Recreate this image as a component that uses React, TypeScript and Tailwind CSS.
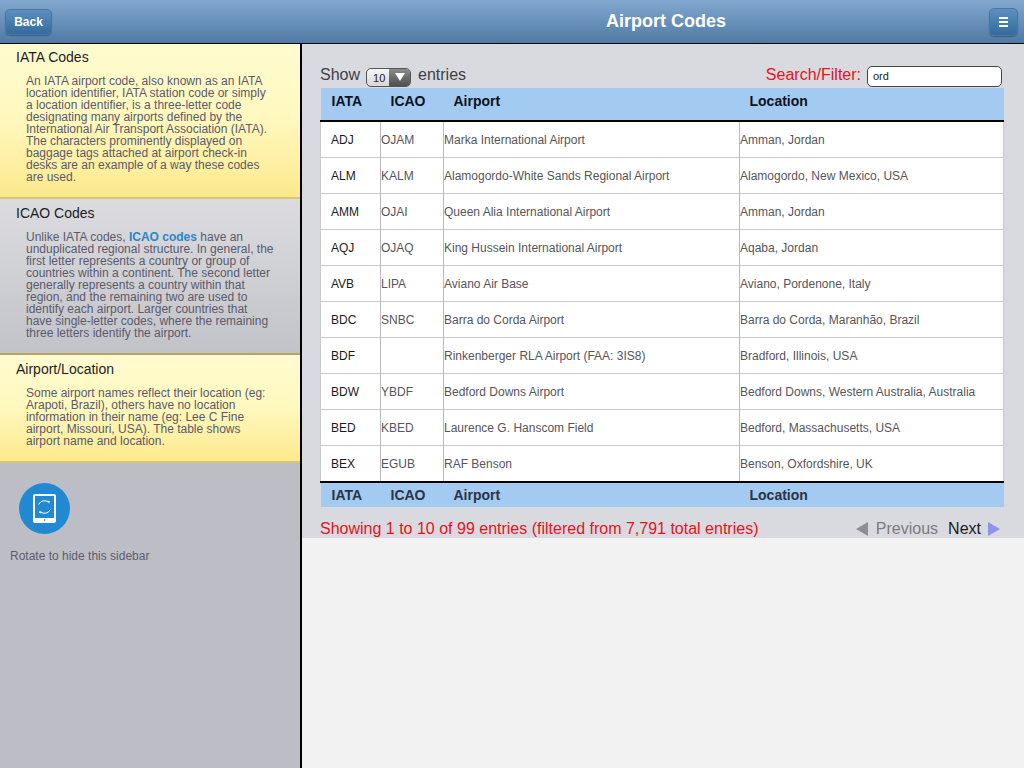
const rows = [
  ["ADJ", "OJAM", "Marka International Airport", "Amman, Jordan"],
  ["ALM", "KALM", "Alamogordo-White Sands Regional Airport", "Alamogordo, New Mexico, USA"],
  ["AMM", "OJAI", "Queen Alia International Airport", "Amman, Jordan"],
  ["AQJ", "OJAQ", "King Hussein International Airport", "Aqaba, Jordan"],
  ["AVB", "LIPA", "Aviano Air Base", "Aviano, Pordenone, Italy"],
  ["BDC", "SNBC", "Barra do Corda Airport", "Barra do Corda, Maranhão, Brazil"],
  ["BDF", "", "Rinkenberger RLA Airport (FAA: 3IS8)", "Bradford, Illinois, USA"],
  ["BDW", "YBDF", "Bedford Downs Airport", "Bedford Downs, Western Australia, Australia"],
  ["BED", "KBED", "Laurence G. Hanscom Field", "Bedford, Massachusetts, USA"],
  ["BEX", "EGUB", "RAF Benson", "Benson, Oxfordshire, UK"],
];

function Panel({ title, tone, height, top, children }: { title: string; tone: "yellow" | "gray"; height: string; top: string; children: React.ReactNode }) {
  const bg =
    tone === "yellow"
      ? "bg-gradient-to-b from-[#fffbd0] via-[#fff8bd] to-[#fde98c] border-b-[#d9c76c]"
      : "bg-gradient-to-b from-[#dcdce0] to-[#c2c3c8] border-b-[#b5a264]";
  return (
    <section className={`${bg} ${height} ${top} border-b-2 pl-4 pr-[25px]`}>
      <h2 className="text-[14px] leading-[16px] font-normal text-[#1d1d1f]">{title}</h2>
      <p className="mt-[10px] pl-[10px] text-[12px] leading-[12px] text-[#5a5a6c]">{children}</p>
    </section>
  );
}

function HeadRow({ foot }: { foot?: boolean }) {
  const cell = `text-left font-bold text-[14px] ${foot ? "text-[#2a3347]" : "text-[#0d1320] pb-[5px]"}`;
  return (
    <tr className={`bg-[#a3caf0] ${foot ? "h-[25px]" : "h-[33px]"}`}>
      <th className={`${cell} pl-[11px]`}>IATA</th>
      <th className={`${cell} pl-[10px]`}>ICAO</th>
      <th className={`${cell} pl-[10px]`}>Airport</th>
      <th className={`${cell} pl-[10px]`}>Location</th>
    </tr>
  );
}

export default function App() {
  const btn = "rounded-[5px] bg-gradient-to-b from-[#5d90bf] to-[#346a9e] border border-[#4a76a0] shadow-[0_1px_1px_rgba(30,60,95,0.5)]";
  return (
    <div className="w-[1024px] h-[768px] overflow-hidden flex flex-col bg-[#f2f2f3] font-['Liberation_Sans',Arial,sans-serif]">
      <header className="h-[44px] shrink-0 border-b border-black bg-gradient-to-b from-[#82a8cf] to-[#4f7aa5] flex items-center pl-[5px] pr-[6px]">
        <div className="w-[296px] shrink-0">
          <button className={`block w-[47px] h-[26px] ${btn} text-[12px] font-bold text-white`}>
            Back
          </button>
        </div>
        <h1 className="flex-1 pl-[42px] text-center text-[18px] font-bold text-white">Airport Codes</h1>
        <button aria-label="Menu" className={`w-[29px] h-[28px] ${btn} flex flex-col items-center justify-center gap-[2px]`}>
          <span className="w-[9px] h-[2px] bg-white" />
          <span className="w-[9px] h-[2px] bg-white" />
          <span className="w-[9px] h-[2px] bg-white" />
        </button>
      </header>

      <div className="flex flex-1 min-h-0">
        <aside className="w-[302px] shrink-0 border-r-2 border-black bg-[#bdbdc5]">
          <Panel title="IATA Codes" tone="yellow" height="h-[155px]" top="pt-[5px]">
            An IATA airport code, also known as an IATA location identifier, IATA station code or simply a location identifier, is a three-letter code designating many airports defined by the International Air Transport Association (IATA). The characters prominently displayed on baggage tags attached at airport check-in desks are an example of a way these codes are used.
          </Panel>
          <Panel title="ICAO Codes" tone="gray" height="h-[156px]" top="pt-[6px]">
            Unlike IATA codes, <b className="text-[#2a85cb]">ICAO codes</b> have an unduplicated regional structure. In general, the first letter represents a country or group of countries within a continent. The second letter generally represents a country within that region, and the remaining two are used to identify each airport. Larger countries that have single-letter codes, where the remaining three letters identify the airport.
          </Panel>
          <Panel title="Airport/Location" tone="yellow" height="h-[108px]" top="pt-[6px]">
            Some airport names reflect their location (eg: Arapoti, Brazil), others have no location information in their name (eg: Lee C Fine airport, Missouri, USA). The table shows airport name and location.
          </Panel>
          <div className="mt-[20px] ml-[19px] w-[51px] h-[51px] rounded-full bg-[#2089d2] flex items-center justify-center">
            <svg width="23" height="29" viewBox="0 0 23 29" fill="none">
              <rect x="1" y="1" width="21" height="27" rx="1" stroke="#fff" strokeWidth="2" />
              <rect x="1" y="24" width="21" height="4" fill="#fff" />
              <circle cx="11.5" cy="26" r="0.8" fill="#1d6fb0" />
              <path d="M5.7 10.5A6.2 6.2 0 0 1 15.6 8.3" stroke="#fff" strokeWidth="1" />
              <path d="M17.3 15.5A6.2 6.2 0 0 1 7.4 17.7" stroke="#fff" strokeWidth="1" />
              <path d="M14.6 6.6L17 7.2L16 9.6Z" fill="#fff" />
              <path d="M8.4 19.4L6 18.8L7 16.4Z" fill="#fff" />
            </svg>
          </div>
          <p className="mt-[15px] ml-[10px] text-[12px] leading-[14px] text-[#5d5d6b]">Rotate to hide this sidebar</p>
        </aside>

        <main className="flex-1 min-w-0">
          <div className="h-[494px] bg-[#d9dadf] pl-[18px] pr-[20px] pt-[20px]">
            <div className="h-[24px] flex items-start justify-between">
              <div className="flex items-center gap-[6px] text-[16px] leading-[22px] text-[#3f3f46]">
                <span className="pb-[4px]">Show</span>
                <span className="w-[45px] h-[19px] rounded-[5px] border border-[#555] bg-gradient-to-b from-[#f5f5f5] to-[#d8d8d8] flex overflow-hidden text-[11px] leading-[18px] text-[#222]">
                  <span className="flex-1 pl-[6px]">10</span>
                  <span className="w-[21px] bg-gradient-to-b from-[#8c8c8c] to-[#4f4f4f] flex items-center justify-center">
                    <svg width="10" height="8" viewBox="0 0 10 8"><path d="M0 0H10L5 8Z" fill="#fff" /></svg>
                  </span>
                </span>
                <span className="ml-[1px] pb-[4px]">entries</span>
              </div>
              <div className="flex items-center gap-[6px] pr-[2px]">
                <span className="pb-[2px] text-[16px] leading-[22px] text-[#e5131c]">Search/Filter:</span>
                <input readOnly value="ord" className="w-[135px] h-[21px] rounded-[5px] border border-[#444] bg-white px-[5px] text-[11px] text-[#222] outline-none" />
              </div>
            </div>

            <table className="w-[684px] table-fixed border-collapse">
              <colgroup>
                <col className="w-[60px]" />
                <col className="w-[63px]" />
                <col className="w-[296px]" />
                <col />
              </colgroup>
              <thead className="border-b-2 border-black">
                <HeadRow />
              </thead>
              <tbody className="bg-white">
                {rows.map((r, i) => (
                  <tr key={r[0]} className={`text-[12px] text-[#55555c] ${i === 9 ? "h-[37px]" : "h-[36px]"}`}>
                    <td className={`pt-[2px] pl-[10px] text-[#1a1a1a] border-l border-l-[#c8c8c8] ${i ? "border-t border-t-[#c8c8c8]" : ""}`}>{r[0]}</td>
                    <td className={`pt-[2px] border-l border-l-[#bbb] ${i ? "border-t border-t-[#c8c8c8]" : ""}`}>{r[1]}</td>
                    <td className={`pt-[2px] border-l border-l-[#bbb] ${i ? "border-t border-t-[#c8c8c8]" : ""}`}>{r[2]}</td>
                    <td className={`pt-[2px] border-l border-l-[#bbb] border-r border-r-[#c8c8c8] ${i ? "border-t border-t-[#c8c8c8]" : ""}`}>{r[3]}</td>
                  </tr>
                ))}
              </tbody>
              <tfoot className="border-t-2 border-black">
                <HeadRow foot />
              </tfoot>
            </table>

            <div className="mt-[11px] flex items-center justify-between text-[16px] leading-[22px] pr-[4px]">
              <span className="text-[#e5131c]">Showing 1 to 10 of 99 entries (filtered from 7,791 total entries)</span>
              <div className="flex items-center">
                <svg width="12" height="14" viewBox="0 0 12 14" className="mr-[8px]"><path d="M12 0V14L0 7Z" fill="#8d8d92" /></svg>
                <span className="text-[#7b7b80]">Previous</span>
                <span className="ml-[10px] text-[#1a1a1a]">Next</span>
                <svg width="12" height="14" viewBox="0 0 12 14" className="ml-[7px]"><path d="M0 0V14L12 7Z" fill="#8f93ea" /></svg>
              </div>
            </div>
          </div>
        </main>
      </div>
    </div>
  );
}
